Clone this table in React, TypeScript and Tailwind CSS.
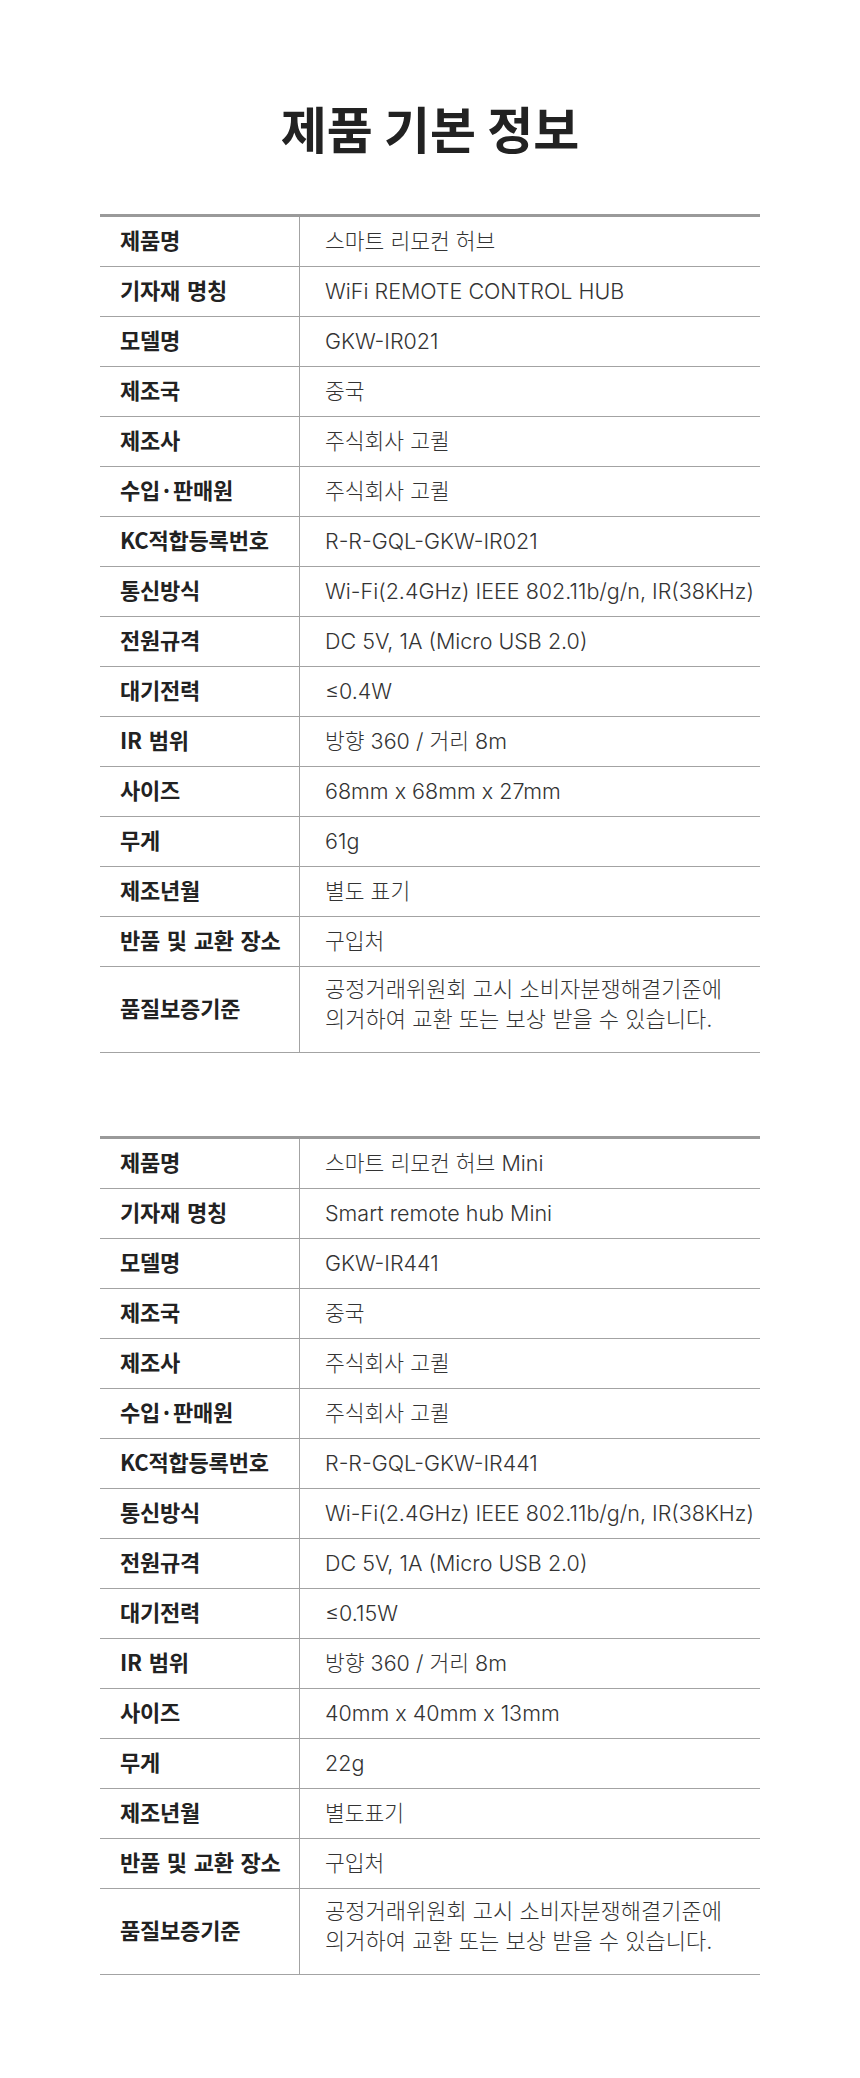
import React from "react";

type Row = { label: string; value: React.ReactNode; tall?: boolean };

const notice = (
  <>
    공정거래위원회 고시 소비자분쟁해결기준에
    <br />
    의거하여 교환 또는 보상 받을 수 있습니다.
  </>
);

const table1: Row[] = [
  { label: "제품명", value: "스마트 리모컨 허브" },
  { label: "기자재 명칭", value: "WiFi REMOTE CONTROL HUB" },
  { label: "모델명", value: "GKW-IR021" },
  { label: "제조국", value: "중국" },
  { label: "제조사", value: "주식회사 고퀼" },
  { label: "수입·판매원", value: "주식회사 고퀼" },
  { label: "KC적합등록번호", value: "R-R-GQL-GKW-IR021" },
  { label: "통신방식", value: "Wi-Fi(2.4GHz) IEEE 802.11b/g/n, IR(38KHz)" },
  { label: "전원규격", value: "DC 5V, 1A (Micro USB 2.0)" },
  { label: "대기전력", value: "≤0.4W" },
  { label: "IR 범위", value: "방향 360 / 거리 8m" },
  { label: "사이즈", value: "68mm x 68mm x 27mm" },
  { label: "무게", value: "61g" },
  { label: "제조년월", value: "별도 표기" },
  { label: "반품 및 교환 장소", value: "구입처" },
  { label: "품질보증기준", value: notice, tall: true },
];

const table2: Row[] = [
  { label: "제품명", value: "스마트 리모컨 허브 Mini" },
  { label: "기자재 명칭", value: "Smart remote hub Mini" },
  { label: "모델명", value: "GKW-IR441" },
  { label: "제조국", value: "중국" },
  { label: "제조사", value: "주식회사 고퀼" },
  { label: "수입·판매원", value: "주식회사 고퀼" },
  { label: "KC적합등록번호", value: "R-R-GQL-GKW-IR441" },
  { label: "통신방식", value: "Wi-Fi(2.4GHz) IEEE 802.11b/g/n, IR(38KHz)" },
  { label: "전원규격", value: "DC 5V, 1A (Micro USB 2.0)" },
  { label: "대기전력", value: "≤0.15W" },
  { label: "IR 범위", value: "방향 360 / 거리 8m" },
  { label: "사이즈", value: "40mm x 40mm x 13mm" },
  { label: "무게", value: "22g" },
  { label: "제조년월", value: "별도표기" },
  { label: "반품 및 교환 장소", value: "구입처" },
  { label: "품질보증기준", value: notice, tall: true },
];

function InfoTable({ rows }: { rows: Row[] }) {
  return (
    <div className="mx-auto w-[660px] border-t-[3px] border-[#9a9a9a]">
      {rows.map((r, i) => (
        <div
          key={i}
          className={`grid grid-cols-[200px_1fr] border-b border-[#a3a3a3] ${
            r.tall ? "h-[86px]" : "h-[50px]"
          }`}
        >
          <div className="flex items-center border-r border-[#a3a3a3] pl-[20px] pb-[6px] text-[22px] font-bold text-[#222] font-['Noto_Sans_CJK_KR',sans-serif] leading-none tracking-[-0.2px] [word-spacing:2px]">
            {r.label}
          </div>
          <div
            className={`flex items-center pl-[25px] whitespace-nowrap text-[#333] font-['Inter','Noto_Sans_CJK_KR',sans-serif] font-light ${
              r.tall ? "text-[22px] leading-[30px] pb-[12px]" : "text-[21.5px] leading-none"
            }`}
          >
            <div>{r.value}</div>
          </div>
        </div>
      ))}
    </div>
  );
}

export default function App() {
  return (
    <div className="min-h-[2078px] w-[860px] bg-white pt-[97px]">
      <h1 className="mb-[57px] h-[60px] text-center text-[50px] font-bold leading-[60px] text-[#222] font-['Noto_Sans_CJK_KR',sans-serif]">
        제품 기본 정보
      </h1>
      <InfoTable rows={table1} />
      <div className="h-[83px]" />
      <InfoTable rows={table2} />
    </div>
  );
}
